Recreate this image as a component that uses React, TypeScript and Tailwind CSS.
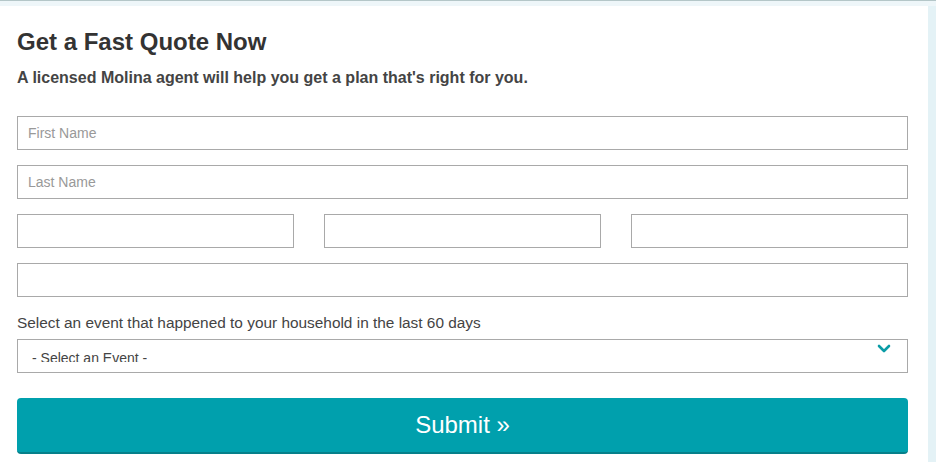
export default function App() {
  return (
    <div className="w-[936px] h-[462px] overflow-hidden bg-[#e4f2f6] font-['Liberation_Sans',Arial,sans-serif]">
      {/* top strip */}
      <div className="h-[1px] bg-[#b4c6c8]" />
      <div className="h-[5px] bg-[#eef6f9]" />
      <div className="flex">
        {/* card */}
        <div className="w-[928px] h-[456px] bg-white pl-[17px] pr-[20px] pt-[22px]">
          <h1 className="text-[24px] leading-[28px] font-bold text-[#333]">Get a Fast Quote Now</h1>
          <p className="mt-[13px] text-[16px] leading-[18px] font-bold text-[#444]">
            A licensed Molina agent will help you get a plan that's right for you.
          </p>

          <div className="mt-[29px] flex flex-col gap-[15px]">
            <input
              className="w-full h-[34px] border border-[#a9a9a9] px-[10px] text-[14px] text-[#555] placeholder:text-[#999] outline-none"
              placeholder="First Name"
            />
            <input
              className="w-full h-[34px] border border-[#a9a9a9] px-[10px] text-[14px] text-[#555] placeholder:text-[#999] outline-none"
              placeholder="Last Name"
            />
            <div className="grid grid-cols-3 gap-[30px]">
              <input className="h-[34px] border border-[#a9a9a9] px-[10px] text-[14px] outline-none" />
              <input className="h-[34px] border border-[#a9a9a9] px-[10px] text-[14px] outline-none" />
              <input className="h-[34px] border border-[#a9a9a9] px-[10px] text-[14px] outline-none" />
            </div>
            <input className="w-full h-[34px] border border-[#a9a9a9] px-[10px] text-[14px] outline-none" />
          </div>

          <div className="mt-[17px] text-[15.4px] leading-[18px] text-[#444]">
            Select an event that happened to your household in the last 60 days
          </div>

          <div className="mt-[7px] h-[34px] border border-[#a9a9a9] flex items-start justify-between pl-[14px] pr-[16px]">
            <div className="h-[22px] overflow-hidden pt-[10px] text-[14px] leading-[16px] text-[#444]">
              - Select an Event -
            </div>
            <svg width="14" height="10" viewBox="0 0 14 10" className="mt-[4px]">
              <path d="M2 2 L7 7 L12 2" fill="none" stroke="#0a9ca6" strokeWidth="2.6" strokeLinecap="round" strokeLinejoin="round" />
            </svg>
          </div>

          <button className="mt-[25px] w-full h-[56px] rounded-[4px] bg-[#00a0ad] border-b-2 border-[#06808a] text-white text-[24px] leading-none">
            Submit »
          </button>
        </div>
      </div>
    </div>
  );
}
